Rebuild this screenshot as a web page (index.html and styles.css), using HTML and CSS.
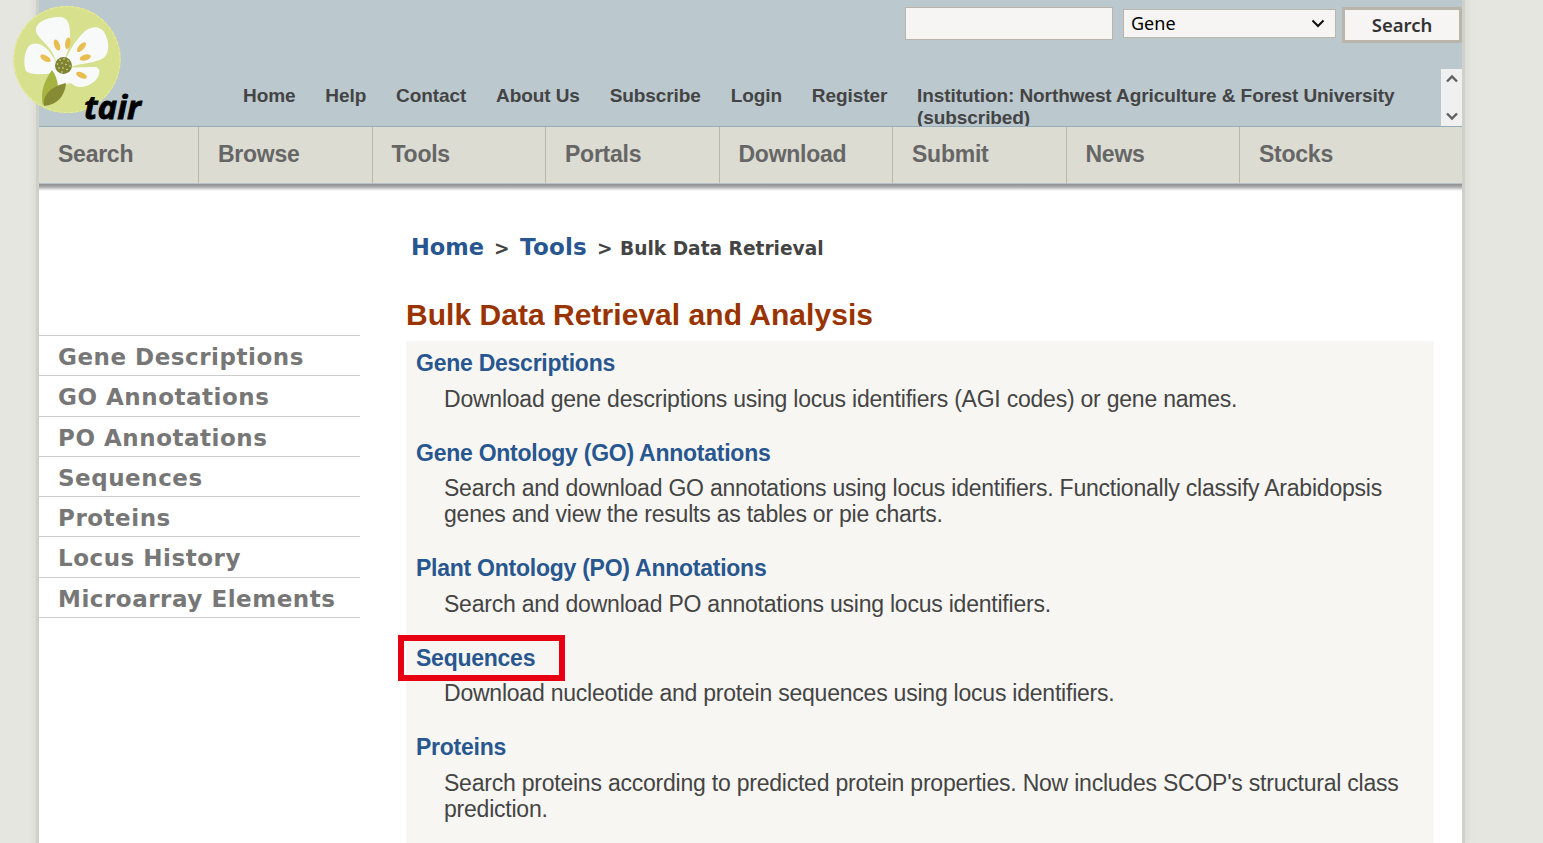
FILE: index.html
```html
<!DOCTYPE html>
<html lang="en">
<head>
<meta charset="utf-8">
<title>TAIR - Bulk Data Retrieval</title>
<link rel="stylesheet" href="styles.css">
</head>
<body>
<div class="page">
  <header class="header">
    <a class="logo" href="#">
      <svg class="logo-svg" width="136" height="122" viewBox="0 0 136 122" aria-label="tair">
        <circle cx="54" cy="53.500" r="53.500" fill="#d6e08d"/>
        <circle cx="54" cy="53.500" r="53" fill="none" stroke="#e8e994" stroke-width="1.200" stroke-dasharray="4 1.500"/>
        <g fill="#f8fafa">
          <path d="M43 55C38 40 29 36 24 28C19 17 34 11 46 11C55 11 57 18 57 28C57 39 55 45 51 55Z"/>
          <path d="M52 55C57 44 61 37 69 28C76 20 86 19 91 26C96 34 98 48 89 53C79 58 66 57 54 62Z"/>
          <path d="M43 56C36 42 26 34 17 39C11 44 10 58 13 65C19 70 37 69 48 64Z"/>
          <path d="M53 61C63 62 74 61 83 61C89 63 86 71 82 75C74 82 63 83 58 77L45 80L40 64Z"/>
        </g>
        <g fill="#e8bd52">
          <ellipse cx="44" cy="39" rx="2.800" ry="5.800" transform="rotate(-20 44 39)"/>
          <ellipse cx="54.800" cy="37.200" rx="2.600" ry="5.800" transform="rotate(8 54.800 37.200)"/>
          <ellipse cx="68.500" cy="41.200" rx="2.800" ry="6" transform="rotate(42 68.500 41.200)"/>
          <ellipse cx="72.300" cy="51.500" rx="2.800" ry="5.800" transform="rotate(73 72.300 51.500)"/>
          <ellipse cx="68.500" cy="69.300" rx="2.800" ry="5.800" transform="rotate(-66 68.500 69.300)"/>
          <ellipse cx="32.500" cy="52.300" rx="2.800" ry="5.800" transform="rotate(-60 32.500 52.300)"/>
        </g>
        <path d="M39 64C31 75 27 87 30 99C38 93 47 82 44 75C43 70 41 67 39 64Z" fill="#a5b340"/>
        <path d="M53 77C39 80 29 89 31 100C43 99 52 91 53 77Z" fill="#858a33"/>
        <circle cx="50.500" cy="59.500" r="8.500" fill="#7e8432"/>
        <g fill="#dce3a4">
          <circle cx="47" cy="54" r=".8"/><circle cx="51" cy="53" r=".8"/><circle cx="55" cy="55" r=".8"/>
          <circle cx="44.500" cy="58" r=".8"/><circle cx="49" cy="57" r=".8"/><circle cx="53" cy="58.500" r=".8"/><circle cx="57" cy="60" r=".8"/>
          <circle cx="46" cy="62" r=".8"/><circle cx="50" cy="62" r=".8"/><circle cx="54" cy="63.500" r=".8"/><circle cx="49" cy="66" r=".8"/>
        </g>
        <text class="logo-text" x="71" y="113" textLength="57" lengthAdjust="spacingAndGlyphs">tair</text>
      </svg>
    </a>
    <form class="search">
      <div class="search-input"></div>
      <div class="search-select"><span>Gene</span>
        <svg width="14" height="9" viewBox="0 0 14 9"><path d="M1.500 1.500L7 7L12.500 1.500" fill="none" stroke="#111" stroke-width="2"/></svg>
      </div>
      <div class="search-button">Search</div>
    </form>
    <nav class="top-links">
      <a>Home</a><a>Help</a><a>Contact</a><a>About Us</a><a>Subscribe</a><a>Login</a><a>Register</a>
      <span class="institution">Institution: Northwest Agriculture &amp; Forest University (subscribed)</span>
      <div class="scroller">
        <svg width="12" height="9" viewBox="0 0 12 9"><path d="M1 7.500L6 2.500L11 7.500" fill="none" stroke="#606060" stroke-width="2.400"/></svg>
        <svg width="12" height="9" viewBox="0 0 12 9"><path d="M1 1.500L6 6.500L11 1.500" fill="none" stroke="#606060" stroke-width="2.400"/></svg>
      </div>
    </nav>
  </header>
  <nav class="main-nav">
    <a>Search</a><a>Browse</a><a>Tools</a><a>Portals</a><a>Download</a><a>Submit</a><a>News</a><a>Stocks</a>
  </nav>
  <div class="nav-shadow"></div>
  <div class="body">
    <aside class="sidebar">
      <a>Gene Descriptions</a><a>GO Annotations</a><a>PO Annotations</a><a>Sequences</a><a>Proteins</a><a>Locus History</a><a>Microarray Elements</a>
    </aside>
    <main class="content">
      <div class="crumbs"><a class="crumb-home">Home</a><span class="sep">&gt;</span><a class="crumb-tools">Tools</a><span class="sep sep-last">&gt;</span><span class="crumb-current">Bulk Data Retrieval</span></div>
      <h1>Bulk Data Retrieval and Analysis</h1>
      <dl class="tools">
        <dt>Gene Descriptions</dt>
        <dd>Download gene descriptions using locus identifiers (AGI codes) or gene names.</dd>
        <dt>Gene Ontology (GO) Annotations</dt>
        <dd>Search and download GO annotations using locus identifiers. Functionally classify Arabidopsis<br>genes and view the results as tables or pie charts.</dd>
        <dt>Plant Ontology (PO) Annotations</dt>
        <dd>Search and download PO annotations using locus identifiers.</dd>
        <dt class="marked">Sequences</dt>
        <dd>Download nucleotide and protein sequences using locus identifiers.</dd>
        <dt>Proteins</dt>
        <dd>Search proteins according to predicted protein properties. Now includes SCOP's structural class<br>prediction.</dd>
      </dl>
    </main>
  </div>
</div>
</body>
</html>
```

FILE: styles.css
```css
*, *::after { box-sizing: border-box; }
body {
  margin: 0;
  height: 843px;
  overflow: hidden;
  background: #e5e6e0;
  font-family: "Liberation Sans", Arial, sans-serif;
  color: #444;
}
.page {
  width: 1423px;
  height: 843px;
  margin-left: 39px;
  background: #fff;
  box-shadow: 0 0 0 3px #cfd0c8, 0 0 8px 4px #d6d7d0;
}
.header {
  position: relative;
  height: 127px;
  background: #bbc8ce;
  border-bottom: 1px solid #94abb8;
}
.logo { position: absolute; left: -26px; top: 6px; }
.logo-svg { display: block; overflow: visible; }
.logo-text { font: italic 700 33px "Open Sans", sans-serif; fill: #000; stroke: #000; stroke-width: .8px; }
.search {
  display: flex;
  justify-content: flex-end;
  align-items: flex-start;
  height: 69px;
  padding-top: 7px;
}
.search-input, .search-select { background: #f6f5f3; border: 1px solid #bab5ab; }
.search-input { width: 208px; height: 33px; margin-right: 10px; }
.search-select {
  display: flex;
  align-items: center;
  justify-content: space-between;
  width: 213px;
  height: 29px;
  margin: 2px 6px 0 0;
  padding: 0 10px 0 7px;
  color: #000;
  font: 18px/29px "Noto Sans", sans-serif;
}
.search-button {
  width: 120px;
  height: 36px;
  border: 3px solid #bab5aa;
  background: #f6f5f3;
  color: #333;
  text-align: center;
  font: 600 18.500px/30px "Noto Sans", sans-serif;
}
.top-links {
  display: flex;
  height: 57px;
  padding: 15.500px 0 0 204px;
  gap: 29.850px;
  overflow: hidden;
  font-size: 19px;
  letter-spacing: -.08px;
  font-weight: 700;
  line-height: 22px;
  white-space: nowrap;
}
.institution { width: 495px; white-space: normal; }
.scroller {
  display: flex;
  flex-direction: column;
  align-items: center;
  justify-content: space-between;
  width: 21px;
  height: 57px;
  margin: -15.500px 0 0 auto;
  padding: 5px 0;
  background: #f0f0f0;
}
.main-nav {
  display: grid;
  grid-template-columns: 160px 173.500px 173.500px 173.500px 173.500px 173.500px 173.500px 1fr;
  height: 57px;
  background: #dcdcd2;
  border-bottom: 1px solid #b9c3c7;
  font-size: 23px;
  letter-spacing: -.25px;
  font-weight: 700;
  line-height: 55px;
  color: #666;
}
.main-nav a { padding-left: 19px; border-right: 1px solid #bab8aa; }
.main-nav a:last-child { border-right: 0; }
.nav-shadow { height: 7px; background: linear-gradient(#8d8f91, #a9aaab 40%, #e6e6e6 80%, #fff); }
.body { display: flex; height: 652px; overflow: hidden; }
.sidebar {
  width: 321px;
  flex: none;
  padding-top: 144px;
  font: 700 23px/39.300px "DejaVu Sans", sans-serif;
  letter-spacing: .53px;
  color: #777;
}
.sidebar a {
  display: block;
  height: 40.300px;
  padding: 2px 0 0 19px;
  border-top: 1px solid #ccc;
  white-space: nowrap;
}
.sidebar a:last-child { height: 41.300px; border-bottom: 1px solid #ccc; }
.content { width: 1028px; margin-left: 46px; flex: none; }
.crumbs {
  display: flex;
  align-items: baseline;
  height: 62px;
  margin: 41px 0 0 5px;
  font: 700 18.600px/30px "DejaVu Sans", sans-serif;
  white-space: nowrap;
}
.crumbs a { font-size: 22.500px; color: #28568f; }
.crumbs .crumb-tools { font-size: 23px; letter-spacing: .25px; }
.sep { width: 17px; margin: 0 9px 0 10px; }
.sep-last { margin-right: 6px; }
h1 { margin: 0; height: 47px; font-size: 30px; letter-spacing: .04px; line-height: 42px; color: #930; }
.tools {
  margin: 0;
  height: 520px;
  padding: 9px 10px;
  background: #f7f6f2;
  font-size: 23px;
  letter-spacing: -.235px;
  line-height: 26px;
}
.tools dt { width: max-content; font-weight: 700; color: #28568f; letter-spacing: -.25px; }
.tools dd { margin: 9.600px 0 28px 28px; letter-spacing: -.225px; white-space: nowrap; }
.marked { position: relative; }
.marked::after {
  content: "";
  position: absolute;
  left: -18px;
  top: -10px;
  width: 167px;
  height: 46px;
  border: 6px solid #e60012;
}
```
